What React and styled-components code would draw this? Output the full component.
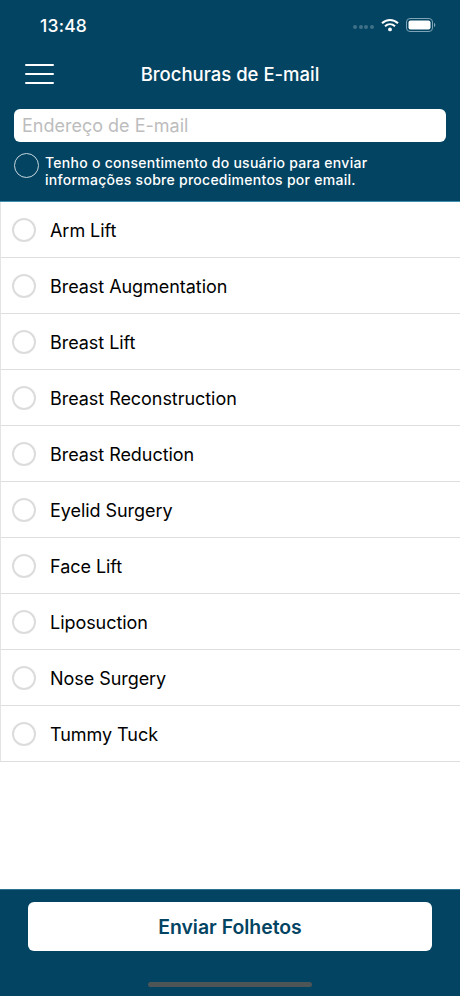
import React from 'react';
import styled, { createGlobalStyle } from 'styled-components';

const Global = createGlobalStyle`
  html, body { margin: 0; padding: 0; background: #fff; }
  * { box-sizing: border-box; }
`;
const Screen = styled.div`
  width: 460px; height: 996px; display: flex; flex-direction: column;
  font-family: Inter, "Liberation Sans", sans-serif; background: #fff; overflow: hidden;
`;
const Header = styled.header`
  background: #034462; height: 202px; flex: none; display: flex; flex-direction: column;
  border-bottom: 1px solid #3f8fb0;
`;
const StatusBar = styled.div`
  height: 48px; padding: 2px 24px 0 40px; display: flex; align-items: center; justify-content: space-between;
  color: #fff;
`;
const Time = styled.span`font-size: 17.5px; font-weight: 500; letter-spacing: 0.2px;`;
const StatusIcons = styled.div`display: flex; align-items: center; gap: 7px;`;
const Dots = styled.div`display: flex; gap: 1.6px; margin-top: 3px;`;
const Dot = styled.i`width: 4px; height: 4px; border-radius: 50%; background: #3f7087; display: block;`;
const NavBar = styled.div`
  height: 50px; position: relative; display: flex; align-items: center; justify-content: center; margin-top: 1px;
`;
const Title = styled.h1`margin: 0; color: #fff; font-size: 18.5px; font-weight: 500;`;
const Menu = styled.div`
  position: absolute; left: 25px; top: 15px; width: 29px; display: flex; flex-direction: column; gap: 7px;
`;
const MenuBar = styled.span`display: block; height: 2px; background: #fff; border-radius: 1px;`;
const EmailInput = styled.div`
  margin: 10px 14px 0; height: 33px; border-radius: 6px; background: #fff; color: #bdbdbd;
  font-size: 18px; padding: 0 8px; display: flex; align-items: center;
`;
const Consent = styled.div`display: flex; align-items: flex-start; gap: 6px; padding: 11px 14px 0;`;
const ConsentCircle = styled.span`
  width: 25px; height: 25px; flex: none; border-radius: 50%; border: 1px solid #c6d6de;
`;
const ConsentText = styled.p`
  margin: 1px 0 0; color: #fff; font-size: 14px; font-weight: 500; line-height: 17px; letter-spacing: 0.27px;
`;
const List = styled.ul`margin: 0; padding: 0; list-style: none; flex: 1;`;
const Row = styled.li`
  height: 56px; display: flex; align-items: center; gap: 14px; padding: 0 0 0 11px;
  border-bottom: 1px solid #dedede; border-left: 1px solid #e4e4e4;
`;
const Radio = styled.span`
  width: 24px; height: 24px; flex: none; border-radius: 50%; border: 2px solid #dcdcdc; background: #fff;
`;
const Label = styled.span`font-size: 18px; color: #000; letter-spacing: -0.05px; padding-top: 1px;`;
const Footer = styled.footer`
  height: 107px; flex: none; background: #034462; border-top: 1px solid #2d7391;
  padding-top: 12px; display: flex; flex-direction: column; align-items: center;
`;
const SendButton = styled.button`
  width: 404px; height: 49px; border: none; border-radius: 6px; background: #fff; color: #034462;
  font: 600 19.4px Inter, "Liberation Sans", sans-serif;
`;
const HomeBar = styled.div`
  width: 164px; height: 5px; border-radius: 3px; background: #4e5557; margin-top: 31px;
`;

const items = ['Arm Lift','Breast Augmentation','Breast Lift','Breast Reconstruction','Breast Reduction','Eyelid Surgery','Face Lift','Liposuction','Nose Surgery','Tummy Tuck'];

export default function App() {
  return (
    <Screen>
      <Global />
      <Header>
        <StatusBar>
          <Time>13:48</Time>
          <StatusIcons>
            <Dots><Dot /><Dot /><Dot /><Dot /></Dots>
            <svg width="18" height="14" viewBox="0 0 18 14" aria-hidden="true">
              <g fill="none" stroke="#fff" strokeWidth="2.1">
                <path d="M1 5.2C5.6 0.9 12.4 0.9 17 5.2" />
                <path d="M4 8.2C6.900 5.6 11.100 5.6 14 8.2" />
              </g>
              <circle cx="9" cy="11.4" r="1.9" fill="#fff" />
            </svg>
            <svg width="30" height="14" viewBox="0 0 30 14" aria-hidden="true">
              <rect x="0.5" y="0.5" width="26" height="13" rx="3.5" fill="none" stroke="#7fa4b5" />
              <rect x="2.5" y="2.5" width="22" height="9" rx="2" fill="#fff" />
              <path d="M28 5v4c.8-.3 1.300-1 1.300-2s-.5-1.700-1.300-2z" fill="#7fa4b5" />
            </svg>
          </StatusIcons>
        </StatusBar>
        <NavBar>
          <Menu><MenuBar /><MenuBar /><MenuBar /></Menu>
          <Title>Brochuras de E-mail</Title>
        </NavBar>
        <EmailInput>Endereço de E-mail</EmailInput>
        <Consent>
          <ConsentCircle />
          <ConsentText>Tenho o consentimento do usuário para enviar<br />informações sobre procedimentos por email.</ConsentText>
        </Consent>
      </Header>
      <List>
        {items.map((t) => (
          <Row key={t}><Radio /><Label>{t}</Label></Row>
        ))}
      </List>
      <Footer>
        <SendButton>Enviar Folhetos</SendButton>
        <HomeBar />
      </Footer>
    </Screen>
  );
}
